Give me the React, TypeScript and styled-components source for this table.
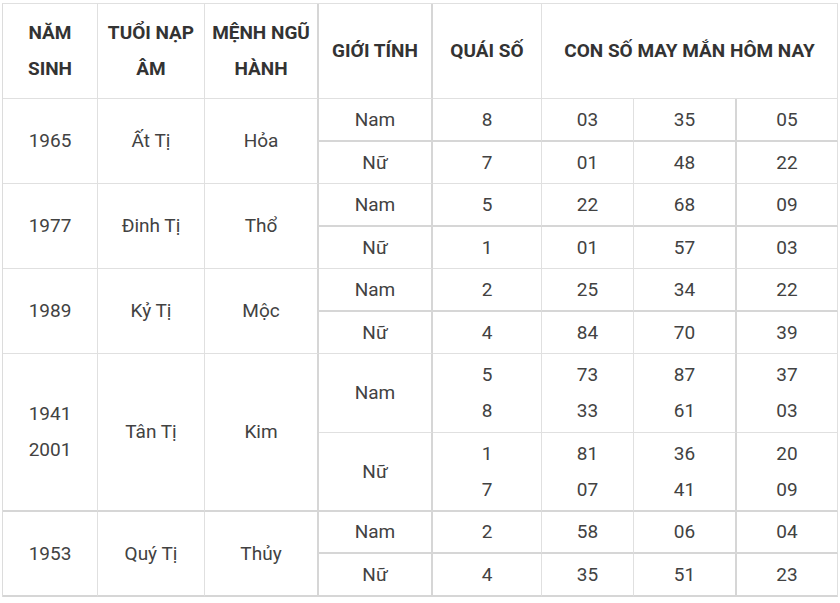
import React from "react";
import styled, { createGlobalStyle } from "styled-components";

const GlobalStyle = createGlobalStyle`
  html, body {
    margin: 0;
    padding: 0;
    background: #ffffff;
  }
  body {
    font-family: Roboto, "Liberation Sans", Arial, sans-serif;
  }
`;

const Page = styled.div`
  padding: 3px 0 0 2px;
`;

const Table = styled.div`
  display: grid;
  grid-template-columns: 95px 107px 114px 114px 109px 92px 103px 101px;
  grid-template-rows: 95px 43px 42px 43px 42px 43px 42px 79px 79px 42px 43px;
  width: 836px;
  border-top: 1px solid #e0e0e0;
  border-left: 1px solid #dcdcdc;
  box-sizing: border-box;
`;

interface CellProps {
  $rows?: number;
  $cols?: number;
  $head?: boolean;
  $thickRight?: boolean;
  $thickBottom?: boolean;
}

const Cell = styled.div<CellProps>`
  box-sizing: border-box;
  grid-row: span ${(p) => p.$rows ?? 1};
  grid-column: span ${(p) => p.$cols ?? 1};
  display: flex;
  align-items: center;
  justify-content: center;
  text-align: center;
  border-right: ${(p) => (p.$thickRight ? "2px solid #d6d6d6" : "1px solid #e0e0e0")};
  border-bottom: ${(p) => (p.$thickBottom ? "2px solid #d6d6d6" : "1px solid #e0e0e0")};
  font-size: 19px;
  line-height: 36px;
  font-weight: ${(p) => (p.$head ? 700 : 400)};
  color: ${(p) => (p.$head ? "#333333" : "#424242")};
  white-space: nowrap;
`;

type Sub = { gender: string; quai: string[]; nums: string[][] };
type Group = { years: string[]; tuoi: string; menh: string; subs: Sub[]; thickEnd?: boolean };

const groups: Group[] = [
  {
    years: ["1965"],
    tuoi: "Ất Tị",
    menh: "Hỏa",
    subs: [
      { gender: "Nam", quai: ["8"], nums: [["03"], ["35"], ["05"]] },
      { gender: "Nữ", quai: ["7"], nums: [["01"], ["48"], ["22"]] },
    ],
  },
  {
    years: ["1977"],
    tuoi: "Đinh Tị",
    menh: "Thổ",
    subs: [
      { gender: "Nam", quai: ["5"], nums: [["22"], ["68"], ["09"]] },
      { gender: "Nữ", quai: ["1"], nums: [["01"], ["57"], ["03"]] },
    ],
  },
  {
    years: ["1989"],
    tuoi: "Kỷ Tị",
    menh: "Mộc",
    subs: [
      { gender: "Nam", quai: ["2"], nums: [["25"], ["34"], ["22"]] },
      { gender: "Nữ", quai: ["4"], nums: [["84"], ["70"], ["39"]] },
    ],
  },
  {
    years: ["1941", "2001"],
    tuoi: "Tân Tị",
    menh: "Kim",
    thickEnd: true,
    subs: [
      { gender: "Nam", quai: ["5", "8"], nums: [["73", "33"], ["87", "61"], ["37", "03"]] },
      { gender: "Nữ", quai: ["1", "7"], nums: [["81", "07"], ["36", "41"], ["20", "09"]] },
    ],
  },
  {
    years: ["1953"],
    tuoi: "Quý Tị",
    menh: "Thủy",
    thickEnd: true,
    subs: [
      { gender: "Nam", quai: ["2"], nums: [["58"], ["06"], ["04"]] },
      { gender: "Nữ", quai: ["4"], nums: [["35"], ["51"], ["23"]] },
    ],
  },
];

const Lines = ({ items }: { items: string[] }) => (
  <div>
    {items.map((t, i) => (
      <React.Fragment key={i}>
        {i > 0 && <br />}
        {t}
      </React.Fragment>
    ))}
  </div>
);

export default function App() {
  return (
    <Page>
      <GlobalStyle />
      <Table>
        <Cell $head>
          <Lines items={["NĂM", "SINH"]} />
        </Cell>
        <Cell $head>
          <Lines items={["TUỔI NẠP", "ÂM"]} />
        </Cell>
        <Cell $head $thickRight>
          <Lines items={["MỆNH NGŨ", "HÀNH"]} />
        </Cell>
        <Cell $head $thickRight>GIỚI TÍNH</Cell>
        <Cell $head>QUÁI SỐ</Cell>
        <Cell $head $cols={3}>CON SỐ MAY MẮN HÔM NAY</Cell>

        {groups.map((g) => (
          <React.Fragment key={g.tuoi}>
            <Cell $rows={2} $thickBottom={g.thickEnd}>
              <Lines items={g.years} />
            </Cell>
            <Cell $rows={2} $thickBottom={g.thickEnd}>
              {g.tuoi}
            </Cell>
            <Cell $rows={2} $thickRight $thickBottom={g.thickEnd}>
              {g.menh}
            </Cell>
            {g.subs.map((s, si) => {
              const tb = si === 0 ? g.years.length === 1 : g.thickEnd;
              return (
                <React.Fragment key={s.gender}>
                  <Cell $thickRight $thickBottom={tb}>{s.gender}</Cell>
                  <Cell $thickBottom={tb}>
                    <Lines items={s.quai} />
                  </Cell>
                  {s.nums.map((n, ni) => (
                    <Cell key={ni} $thickRight={ni === 1} $thickBottom={tb}>
                      <Lines items={n} />
                    </Cell>
                  ))}
                </React.Fragment>
              );
            })}
          </React.Fragment>
        ))}
      </Table>
    </Page>
  );
}
